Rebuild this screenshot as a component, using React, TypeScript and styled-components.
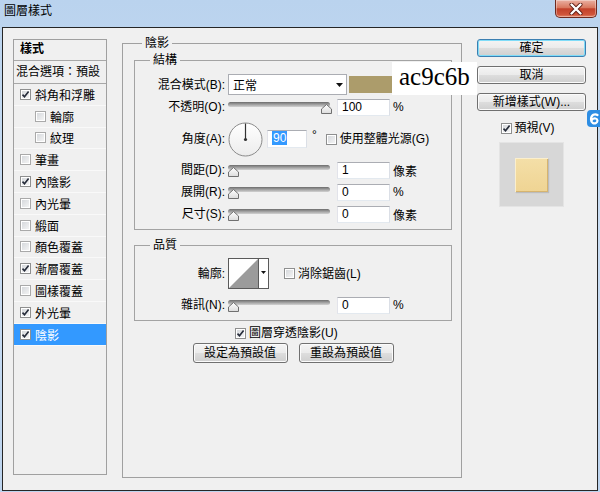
import React from "react";
import styled, { createGlobalStyle } from "styled-components";

const FONT = `"Liberation Sans", "Noto Sans CJK TC", sans-serif`;

const GlobalStyle = createGlobalStyle`
  html, body { margin: 0; padding: 0; }
  body {
    background: #c6dbf1;
    font-family: ${FONT};
    font-size: 12px;
    color: #000;
  }
  * { box-sizing: border-box; }
`;

/* ---------- window chrome ---------- */

const Screen = styled.div`
  position: relative;
  width: 600px;
  height: 492px;
  overflow: hidden;
  display: flex;
  flex-direction: column;
  background: linear-gradient(180deg, #bad3ee 0%, #c9ddf3 45%, #bdd4ee 100%);
`;

const TitleBar = styled.div`
  height: 27px;
  flex: none;
  display: flex;
  justify-content: space-between;
  align-items: flex-start;
  padding-left: 4px;
`;

const Title = styled.span`
  margin-top: 4px;
  line-height: 14px;
`;

const CloseButton = styled.div`
  width: 42px;
  height: 18px;
  margin-right: 3px;
  border: 1px solid #6e2a1f;
  border-top: none;
  border-radius: 0 0 5px 5px;
  background: linear-gradient(
    180deg,
    #eab0a2 0%,
    #d9785f 45%,
    #c2412a 52%,
    #cf543a 85%,
    #e4876a 100%
  );
  box-shadow: inset 0 0 0 1px rgba(255, 255, 255, 0.35);
  display: flex;
  align-items: center;
  justify-content: center;
`;

const Dialog = styled.div`
  flex: none;
  height: 464px;
  margin: 0 2px;
  border: 1px solid #262626;
  background: #f0f0f0;
  display: flex;
  align-items: flex-start;
  padding-left: 10px;
  gap: 15px;
`;

/* ---------- left style list ---------- */

const StyleList = styled.div`
  margin-top: 11px;
  width: 94px;
  height: 436px;
  flex: none;
  border: 1px solid #a0a0a0;
  background: #f0f0f0;
`;

const ListHeader = styled.div`
  height: 21px;
  border-bottom: 1px solid #a8a8a8;
  padding: 2px 0 0 6px;
  line-height: 14px;
  font-weight: bold;
`;

const OptionRow = styled.div`
  height: 23px;
  border-bottom: 1px solid #a8a8a8;
  padding-left: 2px;
  line-height: 22px;
`;

const ListItem = styled.div<{ $indent?: boolean; $active?: boolean }>`
  height: 21.8px;
  display: flex;
  align-items: center;
  gap: 4px;
  padding-left: ${({ $indent }) => ($indent ? 21 : 6)}px;
  border-bottom: 1px solid #f9f9f9;
  background: ${({ $active }) => ($active ? "#3399ff" : "transparent")};
  color: ${({ $active }) => ($active ? "#fff" : "#000")};
  white-space: nowrap;
`;

/* ---------- checkbox ---------- */

const Box = styled.span<{ $dim?: boolean }>`
  width: 11px;
  height: 11px;
  flex: none;
  display: inline-flex;
  border: 1px solid ${({ $dim }) => ($dim ? "#a9a9a9" : "#8e8f8f")};
  background: linear-gradient(135deg, #d2d5d9 0%, #f7f7f7 100%);
  box-shadow: inset 0 0 0 1px #fff;
`;

const Check: React.FC<{ on?: boolean; dim?: boolean }> = ({ on, dim }) => (
  <Box $dim={dim}>
    {on && (
      <svg width="9" height="9" viewBox="0 0 9 9">
        <path
          d="M1.5 4.6 L3.5 6.8 L7.6 1.6"
          fill="none"
          stroke="#262c3a"
          strokeWidth="1.6"
        />
      </svg>
    )}
  </Box>
);

const CheckLabel = styled.label<{ $ml?: number }>`
  display: inline-flex;
  align-items: center;
  gap: 3px;
  margin-left: ${({ $ml }) => $ml ?? 0}px;
  white-space: nowrap;
  line-height: 14px;
`;

/* ---------- centre panel ---------- */

const MainGroup = styled.fieldset`
  margin: 8px 0 0 0;
  width: 340px;
  height: 442px;
  flex: none;
  min-width: 0;
  padding: 2px 9px 0 11px;
  border: 1px solid #a0a0a0;
`;

const SubGroup = styled.fieldset<{ $mt?: number }>`
  margin: ${({ $mt }) => $mt ?? 0}px 0 0 0;
  min-width: 0;
  padding: 0 0 4px 0;
  border: 1px solid #a3a3a3;
`;

const Legend = styled.legend<{ $ml: number }>`
  margin-left: ${({ $ml }) => $ml}px;
  padding: 0 3px;
  line-height: 15px;
`;

const FieldRow = styled.div<{ $h: number; $mt?: number }>`
  display: flex;
  align-items: center;
  height: ${({ $h }) => $h}px;
  margin-top: ${({ $mt }) => $mt ?? 0}px;
`;

const Label = styled.span`
  width: 90px;
  flex: none;
  margin-right: 3px;
  text-align: right;
  white-space: nowrap;
  line-height: 14px;
`;

const Select = styled.div`
  width: 119px;
  height: 21px;
  flex: none;
  border: 1px solid #abadb3;
  background: #fff;
  display: flex;
  align-items: center;
  justify-content: space-between;
  padding: 0 3px 0 4px;
`;

const Swatch = styled.div<{ $color: string }>`
  width: 43px;
  height: 17px;
  margin-left: 2px;
  flex: none;
  background: ${({ $color }) => $color};
`;

const SliderWrap = styled.div`
  position: relative;
  width: 104px;
  height: 100%;
  flex: none;
  margin-right: 5px;
`;

const Track = styled.div`
  position: absolute;
  left: 0;
  right: 2px;
  top: 50%;
  margin-top: -5px;
  height: 5px;
  border-radius: 3px;
  background: linear-gradient(180deg, #6c6c6c 0%, #9c9c9c 45%, #d2d2d2 100%);
`;

const Thumb = styled.svg`
  position: absolute;
  top: 50%;
  margin-top: -3px;
`;

const Slider: React.FC<{ at: number }> = ({ at }) => (
  <SliderWrap>
    <Track />
    <Thumb
      width="11"
      height="10"
      viewBox="0 0 11 10"
      style={{ left: `calc(${at} * (100% - 11px))` }}
    >
      <defs>
        <linearGradient id="thumbFill" x1="0" y1="0" x2="0" y2="1">
          <stop offset="0" stopColor="#ffffff" />
          <stop offset="1" stopColor="#dcdcdc" />
        </linearGradient>
      </defs>
      <path
        d="M5.5 0.5 L10.5 5 L10.5 9.5 L0.5 9.5 L0.5 5 Z"
        fill="url(#thumbFill)"
        stroke="#707070"
      />
    </Thumb>
  </SliderWrap>
);

const NumInput = styled.div<{ $w?: number }>`
  width: ${({ $w }) => $w ?? 53}px;
  height: ${({ $w }) => ($w ? 18 : 17)}px;
  flex: none;
  border: 1px solid;
  border-color: #abadb3 #dbdfe6 #e3e9ef #e2e3ea;
  background: #fff;
  padding-left: 4px;
  line-height: 15px;
`;

const Unit = styled.span`
  margin-left: 3px;
  white-space: nowrap;
`;

const Selected = styled.span`
  background: #3399ff;
  color: #fff;
  padding: 0 1px;
`;

const Degree = styled.span`
  margin: -8px 0 0 5px;
  line-height: 12px;
`;

const ContourPicker = styled.div`
  display: flex;
  height: 31px;
  flex: none;
  border: 1px solid #5a5a5a;
  background: #fff;
`;

const ContourArrow = styled.div`
  width: 10px;
  border-left: 1px solid #5a5a5a;
  display: flex;
  align-items: center;
  justify-content: center;
  padding-bottom: 3px;
`;

const ToggleRow = styled.div`
  height: 18px;
  margin-top: 3px;
  padding-left: 101px;
  display: flex;
  align-items: center;
`;

const ButtonRow = styled.div`
  display: flex;
  justify-content: center;
  gap: 11px;
  margin-top: 1px;
`;

const Button = styled.button<{ $w?: number; $primary?: boolean }>`
  width: ${({ $w }) => ($w ? `${$w}px` : "100%")};
  height: ${({ $w }) => ($w ? 20 : 18)}px;
  padding: 0;
  font-family: ${FONT};
  font-size: 12px;
  line-height: 14px;
  color: #000;
  border: 1px solid ${({ $primary }) => ($primary ? "#3c7fb1" : "#707070")};
  border-radius: 3px;
  background: linear-gradient(
    180deg,
    #f4f4f4 0%,
    #ebebeb 48%,
    #dddddd 52%,
    #cfcfcf 100%
  );
  box-shadow: inset 0 0 0 1px
    ${({ $primary }) => ($primary ? "#7fdcf8" : "#fbfbfb")};
  flex: none;
`;

const DownArrow = () => (
  <svg width="7" height="4" viewBox="0 0 7 4">
    <path d="M0 0 H7 L3.5 4 Z" fill="#111" />
  </svg>
);

/* ---------- right column ---------- */

const Side = styled.div`
  margin-top: 11px;
  width: 109px;
  flex: none;
  display: flex;
  flex-direction: column;
  align-items: center;
  gap: 9px;
`;

const PreviewToggle = styled.div`
  height: 18px;
  margin-top: -1px;
  padding-right: 8px;
  display: flex;
  align-items: center;
`;

const PreviewBox = styled.div`
  width: 65px;
  height: 65px;
  margin-top: -4px;
  background: #d7d7d7;
  border: 1px solid #e4e4e4;
  display: flex;
  align-items: center;
  justify-content: center;
`;

const PreviewSwatch = styled.div`
  width: 33px;
  height: 34px;
  background: linear-gradient(180deg, #f4dfa8 0%, #efd493 100%);
  box-shadow: inset 1px 1px 0 #fbefcd, inset -1px -1px 0 #d6b46f,
    1px 1px 1px rgba(0, 0, 0, 0.12);
`;

/* ---------- overlays ---------- */

const Annotation = styled.div`
  position: absolute;
  left: 392px;
  top: 62px;
  width: 85px;
  height: 33px;
  background: #fff;
  padding-left: 7px;
  font-family: "Liberation Serif", "DejaVu Serif", "Times New Roman", serif;
  font-size: 25px;
  line-height: 29px;
`;

const FloatTab = styled.div`
  position: absolute;
  left: 587px;
  top: 110px;
  width: 16px;
  height: 17px;
  border-radius: 4px 0 0 4px;
  background: #2d8de3;
  display: flex;
  align-items: center;
  padding-left: 2px;
`;

const layers: { name: string; on: boolean; indent?: boolean }[] = [
  { name: "斜角和浮雕", on: true },
  { name: "輪廓", on: false, indent: true },
  { name: "紋理", on: false, indent: true },
  { name: "筆畫", on: false },
  { name: "內陰影", on: true },
  { name: "內光暈", on: false },
  { name: "緞面", on: false },
  { name: "顏色覆蓋", on: false },
  { name: "漸層覆蓋", on: true },
  { name: "圖樣覆蓋", on: false },
  { name: "外光暈", on: true },
  { name: "陰影", on: true },
];

const sliders = [
  { label: "間距(D):", value: "1", unit: "像素" },
  { label: "展開(R):", value: "0", unit: "%" },
  { label: "尺寸(S):", value: "0", unit: "像素" },
];

export default function App() {
  return (
    <Screen>
      <GlobalStyle />
      <TitleBar>
        <Title>圖層樣式</Title>
        <CloseButton>
          <svg width="14" height="12" viewBox="0 0 14 12">
            <path
              d="M2.5 1.5 L11.5 10.5 M11.5 1.5 L2.5 10.5"
              stroke="#5a1a12"
              strokeWidth="4"
              strokeLinecap="round"
            />
            <path
              d="M2.5 1.5 L11.5 10.5 M11.5 1.5 L2.5 10.5"
              stroke="#fff"
              strokeWidth="2.4"
              strokeLinecap="round"
            />
          </svg>
        </CloseButton>
      </TitleBar>

      <Dialog>
        <StyleList>
          <ListHeader>樣式</ListHeader>
          <OptionRow>混合選項：預設</OptionRow>
          {layers.map((l, i) => (
            <ListItem
              key={l.name}
              $indent={l.indent}
              $active={i === layers.length - 1}
            >
              <Check on={l.on} dim={!l.on} />
              {l.name}
            </ListItem>
          ))}
        </StyleList>

        <MainGroup>
          <Legend $ml={8}>陰影</Legend>

          <SubGroup>
            <Legend $ml={15}>結構</Legend>
            <FieldRow $h={21} $mt={6}>
              <Label>混合模式(B):</Label>
              <Select>
                正常
                <DownArrow />
              </Select>
              <Swatch $color="#ac9c6b" />
            </FieldRow>
            <FieldRow $h={22} $mt={1}>
              <Label>不透明(O):</Label>
              <Slider at={1} />
              <NumInput>100</NumInput>
              <Unit>%</Unit>
            </FieldRow>
            <FieldRow $h={34} $mt={4}>
              <Label>角度(A):</Label>
              <svg width="35" height="35" viewBox="0 0 35 35">
                <defs>
                  <linearGradient id="dialFill" x1="0" y1="0" x2="0" y2="1">
                    <stop offset="0" stopColor="#ffffff" />
                    <stop offset="1" stopColor="#ececec" />
                  </linearGradient>
                </defs>
                <circle
                  cx="17.5"
                  cy="17.5"
                  r="16.5"
                  fill="url(#dialFill)"
                  stroke="#8a8a8a"
                />
                <line
                  x1="17.5"
                  y1="17.5"
                  x2="17.5"
                  y2="1.5"
                  stroke="#333"
                  strokeWidth="1.2"
                />
                <circle cx="17.5" cy="17.5" r="1.6" fill="#333" />
              </svg>
              <NumInput $w={40} style={{ marginLeft: 4 }}>
                <Selected>90</Selected>
              </NumInput>
              <Degree>°</Degree>
              <CheckLabel $ml={9}>
                <Check />
                使用整體光源(G)
              </CheckLabel>
            </FieldRow>
            {sliders.map((s, i) => (
              <FieldRow key={s.label} $h={22} $mt={i === 0 ? 3 : 0}>
                <Label>{s.label}</Label>
                <Slider at={0} />
                <NumInput>{s.value}</NumInput>
                <Unit>{s.unit}</Unit>
              </FieldRow>
            ))}
          </SubGroup>

          <SubGroup $mt={8}>
            <Legend $ml={15}>品質</Legend>
            <FieldRow $h={31} $mt={5}>
              <Label>輪廓:</Label>
              <ContourPicker>
                <svg width="29" height="29" viewBox="0 0 29 29">
                  <path d="M0 29 L29 0 L29 29 Z" fill="#9b9b9b" />
                </svg>
                <ContourArrow>
                  <svg width="5" height="3" viewBox="0 0 5 3">
                    <path d="M0 0 H5 L2.5 3 Z" fill="#111" />
                  </svg>
                </ContourArrow>
              </ContourPicker>
              <CheckLabel $ml={15}>
                <Check />
                消除鋸齒(L)
              </CheckLabel>
            </FieldRow>
            <FieldRow $h={22} $mt={5}>
              <Label>雜訊(N):</Label>
              <Slider at={0} />
              <NumInput>0</NumInput>
              <Unit>%</Unit>
            </FieldRow>
          </SubGroup>

          <ToggleRow>
            <CheckLabel>
              <Check on />
              圖層穿透陰影(U)
            </CheckLabel>
          </ToggleRow>
          <ButtonRow>
            <Button $w={95}>設定為預設值</Button>
            <Button $w={95}>重設為預設值</Button>
          </ButtonRow>
        </MainGroup>

        <Side>
          <Button $primary>確定</Button>
          <Button>取消</Button>
          <Button>新增樣式(W)...</Button>
          <PreviewToggle>
            <CheckLabel>
              <Check on />
              預視(V)
            </CheckLabel>
          </PreviewToggle>
          <PreviewBox>
            <PreviewSwatch />
          </PreviewBox>
        </Side>
      </Dialog>

      <Annotation>ac9c6b</Annotation>
      <FloatTab>
        <svg width="11" height="12" viewBox="0 0 11 12">
          <path
            d="M8.5 2 C6 0.5 2 1.5 2 6.5 C2 10 5 11 7 10 C9 9 9 6 6.5 5.5 C4.5 5.2 3 6.5 2.5 7.5"
            fill="none"
            stroke="#fff"
            strokeWidth="2.2"
            strokeLinecap="round"
          />
        </svg>
      </FloatTab>
    </Screen>
  );
}
